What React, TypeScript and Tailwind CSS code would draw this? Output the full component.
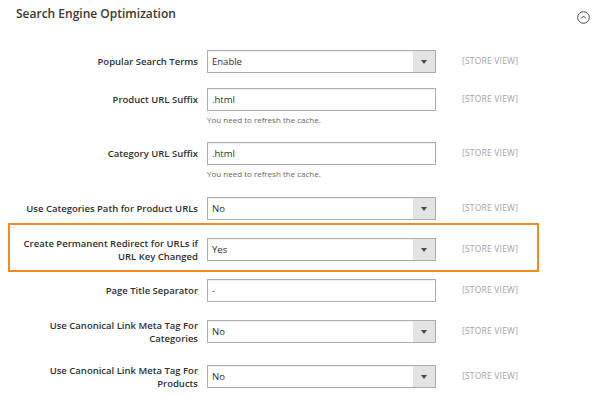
import React from 'react';

type Row = {
    label: string[];
    kind: 'select' | 'input';
    value: string;
    hint?: string;
    mt: string;
    highlight?: boolean;
};

const rows: Row[] = [
    { label: ['Popular Search Terms'], kind: 'select', value: 'Enable', mt: 'mt-[20px]' },
    { label: ['Product URL Suffix'], kind: 'input', value: '.html', hint: 'You need to refresh the cache.', mt: 'mt-[11px]' },
    { label: ['Category URL Suffix'], kind: 'input', value: '.html', hint: 'You need to refresh the cache.', mt: 'mt-[13px]' },
    { label: ['Use Categories Path for Product URLs'], kind: 'select', value: 'No', mt: 'mt-[14px]' },
    { label: ['Create Permanent Redirect for URLs if', 'URL Key Changed'], kind: 'select', value: 'Yes', mt: 'mt-[1px]', highlight: true },
    { label: ['Page Title Separator'], kind: 'input', value: '-', mt: 'mt-[5px]' },
    { label: ['Use Canonical Link Meta Tag For', 'Categories'], kind: 'select', value: 'No', mt: 'mt-[14px]' },
    { label: ['Use Canonical Link Meta Tag For', 'Products'], kind: 'select', value: 'No', mt: 'mt-[18px]' },
];

const Control = ({ row }: { row: Row }) => (
    <div className="w-[229px] h-[23px] border border-[#adadad] bg-white flex items-center shadow-[inset_0_1px_1px_rgba(0,0,0,0.06)]">
        <span className="flex-1 pl-[4px] text-[9.5px] text-[#303030] leading-none">{ row.value }</span>
        { row.kind === 'select' && (
            <span className="w-[22px] h-full bg-[#e3e3e3] flex items-center justify-center">
                <svg width="6" height="4" viewBox="0 0 6 4">
                    <path d="M0 0 L6 0 L3 4 Z" fill="#514943"/>
                </svg>
            </span>
        ) }
    </div>
);

const FieldRow = ({ row }: { row: Row }) => (
    <div className={ `${ row.mt } border-2 ${ row.highlight ? 'border-[#f7891f] pt-[13px] pb-[9px]' : 'border-transparent' } w-[531px]` }>
        <div className="flex items-start">
            <div className="w-[188px] h-[23px] text-right text-[9.5px] font-semibold text-[#303030] leading-[13px] flex flex-col justify-center">
                { row.label.map(l => <span key={ l } className="whitespace-nowrap">{ l }</span>) }
            </div>
            <div className="ml-[9px] flex flex-col">
                <Control row={ row }/>
                { row.hint && (
                    <span className="mt-[4px] text-[8px] text-[#666] leading-[10px]">{ row.hint }</span>
                ) }
            </div>
            <span className="ml-[26px] h-[23px] flex items-center text-[8.5px] text-[#a3a3a3] tracking-[0.2px]">[STORE VIEW]</span>
        </div>
    </div>
);

export default function App() {
    return (
        <section className="w-[602px] h-[396px] bg-white overflow-hidden" style={ { fontFamily: '"Open Sans", "Liberation Sans", sans-serif' } }>
            <header className="flex items-start h-[28px] pl-[16px] pr-[12px]">
                <h1 className="pt-[5px] text-[12px] leading-[17px] font-semibold text-[#41362f]">Search Engine Optimization</h1>
                <span className="flex-1"/>
                <svg className="mt-[11px]" width="13" height="13" viewBox="0 0 13 13">
                    <circle cx="6.5" cy="6.5" r="5.8" fill="none" stroke="#514943" strokeWidth="1"/>
                    <path d="M4 7.5 L6.5 5 L9 7.5" fill="none" stroke="#514943" strokeWidth="1"/>
                </svg>
            </header>
            <div className="pl-[8px]">
                { rows.map(r => <FieldRow key={ r.label.join(' ') } row={ r }/>) }
            </div>
        </section>
    );
}
